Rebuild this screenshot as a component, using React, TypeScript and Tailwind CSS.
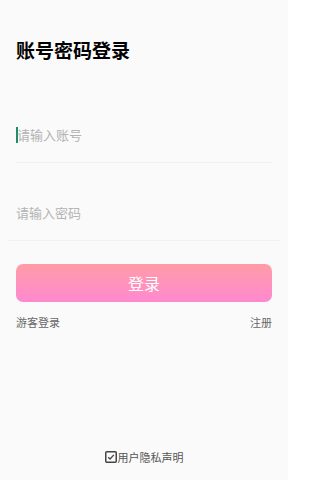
const font = { fontFamily: '"Noto Sans CJK SC", "Noto Sans", sans-serif' };

function CheckIcon() {
  return (
    <svg width="12" height="12" viewBox="0 0 12 12" className="shrink-0">
      <rect x="0.75" y="0.75" width="10.5" height="10.5" rx="1" fill="none" stroke="#444" strokeWidth="1.5" />
      <path d="M3.2 6.2 L5.1 8 L8.8 3.9" fill="none" stroke="#444" strokeWidth="1.3" />
    </svg>
  );
}

export default function App() {
  return (
    <div className="flex min-h-[480px] w-[288px] flex-col bg-[#fafafa]" style={font}>
      <h1 className="ml-4 mt-[37px] text-[19px] font-bold leading-[26px] text-black">账号密码登录</h1>

      {/* account */}
      <div className="mx-4 mt-[22px] flex h-[78px] items-end border-b border-[#f1f1f1] pb-[18px]">
        <span className="mb-px h-[16px] w-[2px] bg-[#1f8a6c]" />
        <span className="-ml-px text-[13px] leading-[18px] text-[#b3b3b3]">请输入账号</span>
      </div>

      {/* password */}
      <div className="mx-2 flex h-[78px] items-end border-b border-[#f1f1f1] px-2 pb-[18px]">
        <span className="text-[13px] leading-[18px] text-[#b3b3b3]">请输入密码</span>
      </div>

      <button className="mx-4 mt-[23px] flex h-[38px] items-center justify-center rounded-[7px] bg-gradient-to-b from-[#ff9ca6] to-[#ff88cf] text-[16px] text-white">
        登录
      </button>

      <div className="mx-4 mt-3 flex justify-between text-[11px] leading-4 text-[#666]">
        <span>游客登录</span>
        <span>注册</span>
      </div>

      <div className="mt-auto flex items-center justify-center pb-[15px] text-[11px] leading-4 text-[#555]">
        <CheckIcon />
        <span className="ml-px">用户隐私声明</span>
      </div>
    </div>
  );
}
